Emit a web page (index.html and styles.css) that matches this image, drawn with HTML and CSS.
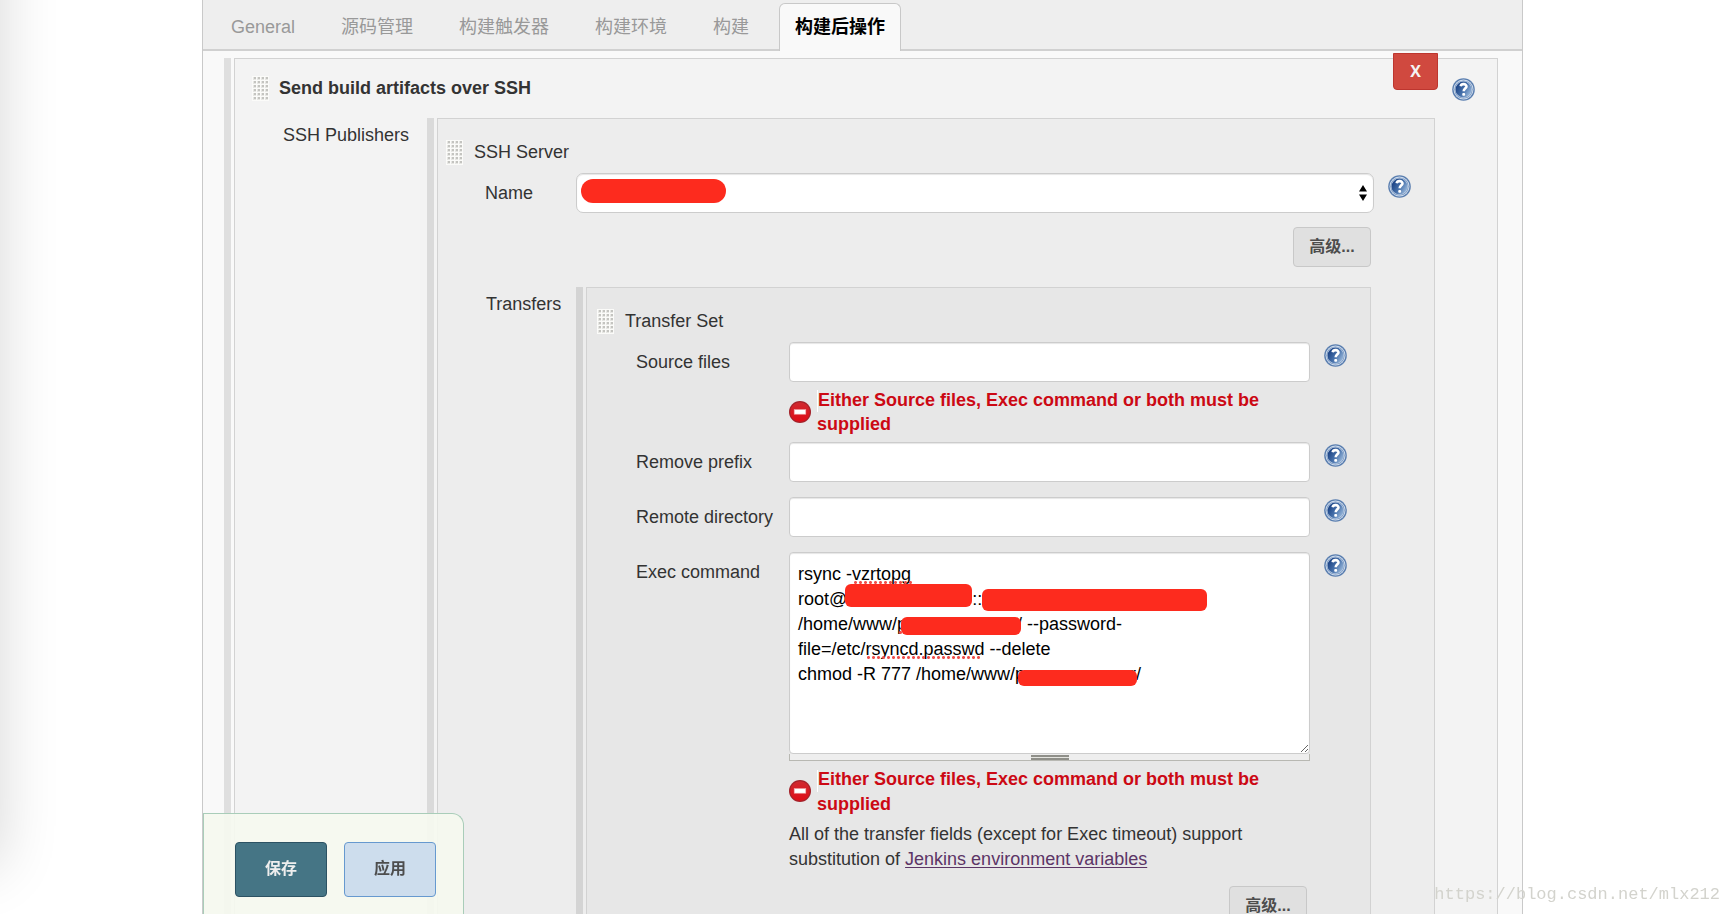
FILE: index.html
```html
<!DOCTYPE html>
<html lang="zh-CN">
<head>
<meta charset="utf-8">
<title>Jenkins</title>
<link rel="stylesheet" href="styles.css">
</head>
<body>
<svg class="defs" aria-hidden="true">
  <defs>
    <linearGradient id="blue" x1="0" y1="0.2" x2="1" y2="0.8">
      <stop offset="0.1" stop-color="#1d4587"/>
      <stop offset="0.55" stop-color="#4a74ad"/>
      <stop offset="1" stop-color="#a3c0e0"/>
    </linearGradient>
    <linearGradient id="red" x1="0" y1="0" x2="0" y2="1">
      <stop offset="0" stop-color="#cf2a30"/>
      <stop offset="1" stop-color="#e00d17"/>
    </linearGradient>
    <pattern id="dots" width="4" height="4" patternUnits="userSpaceOnUse">
      <rect width="4" height="4" fill="#fbfbf9"/>
      <rect x="1" y="1" width="3" height="3" fill="#e6e6e3"/>
      <rect x="2" y="1" width="2" height="2" fill="#c4c4c0"/>
    </pattern>
    <symbol id="help" viewBox="0 0 24 24">
      <circle cx="12" cy="12" r="11.8" fill="#5b7fb0"/>
      <circle cx="12" cy="12" r="10.4" fill="#d3dfee"/>
      <circle cx="12" cy="12" r="9.5" fill="#6f90bd"/>
      <circle cx="12" cy="12" r="8.8" fill="#c6d5e8"/>
      <circle cx="12" cy="12" r="8.3" fill="url(#blue)"/>
      <path d="M9 8.6C9.4 6.9 10.7 6.3 12.2 6.4C14 6.5 15.2 7.5 15.1 9C15 10.6 12.2 11.2 12.2 13.9" fill="none" stroke="#fff" stroke-width="2.7"/>
      <rect x="10.7" y="15.6" width="3" height="3" rx="1" fill="#fff"/>
    </symbol>
    <symbol id="error" viewBox="0 0 22 22">
      <circle cx="11" cy="11" r="11" fill="#a3222a"/>
      <circle cx="11" cy="11" r="9.8" fill="url(#red)"/>
      <rect x="5.2" y="8.6" width="11.6" height="4.6" fill="#fff" stroke="#f2a3a6" stroke-width="0.6"/>
    </symbol>
    <symbol id="grip" viewBox="0 0 17 25">
      <rect width="17" height="25" fill="url(#dots)"/>
    </symbol>
  </defs>
</svg>

<div class="edge-shadow"></div>

<main class="page">
  <form class="config">
    <nav class="tabs">
      <a class="tab" href="#general">General</a>
      <a class="tab" href="#scm">源码管理</a>
      <a class="tab" href="#triggers">构建触发器</a>
      <a class="tab" href="#environment">构建环境</a>
      <a class="tab" href="#build">构建</a>
      <a class="tab tab-active" href="#post-build">构建后操作</a>
    </nav>

    <section class="block block-outer">
      <div class="rail"></div>
      <div class="box">
        <button class="delete" type="button">X</button>
        <header class="head-main">
          <svg class="grip"><use href="#grip"/></svg>
          <h2 class="title">Send build artifacts over SSH</h2>
          <svg class="help"><use href="#help"/></svg>
        </header>
        <div class="nest nest-publishers">
          <div class="nest-label">SSH Publishers</div>
          <section class="block">
            <div class="rail"></div>
            <div class="box">
              <header class="head">
                <svg class="grip"><use href="#grip"/></svg>
                <span>SSH Server</span>
              </header>
              <div class="row row-server">
                <label class="label" for="name">Name</label>
                <div class="select-wrap">
                  <select class="field select" id="name"><option></option></select>
                  <svg class="arrows" viewBox="0 0 8 16"><path d="M4 0L8 6.5H0ZM0 9.5H8L4 16Z"/></svg>
                  <span class="mask mask-name"></span>
                </div>
                <svg class="help"><use href="#help"/></svg>
              </div>
              <div class="actions"><button class="advanced" type="button">高级...</button></div>

              <div class="nest nest-transfers">
                <div class="nest-label">Transfers</div>
                <section class="block">
                  <div class="rail"></div>
                  <div class="box">
                    <header class="head head-transfer">
                      <svg class="grip"><use href="#grip"/></svg>
                      <span>Transfer Set</span>
                    </header>
                    <div class="row">
                      <label class="label" for="source">Source files</label>
                      <input class="field" id="source" type="text">
                      <svg class="help"><use href="#help"/></svg>
                      <div class="error">
                        <svg class="error-icon"><use href="#error"/></svg>
                        <p class="error-text"><span class="spacer"></span>Either Source files, Exec command or both must be supplied</p>
                      </div>
                    </div>
                    <div class="row">
                      <label class="label" for="prefix">Remove prefix</label>
                      <input class="field" id="prefix" type="text">
                      <svg class="help"><use href="#help"/></svg>
                    </div>
                    <div class="row row-next">
                      <label class="label" for="remote">Remote directory</label>
                      <input class="field" id="remote" type="text">
                      <svg class="help"><use href="#help"/></svg>
                    </div>
                    <div class="row row-next">
                      <label class="label" for="exec">Exec command</label>
                      <div class="editor">
                        <textarea class="field command" id="exec" spellcheck="false">rsync -vzrtopg
root@&nbsp;&nbsp;&nbsp;&nbsp;&nbsp;&nbsp;&nbsp;&nbsp;&nbsp;&nbsp;&nbsp;&nbsp;&nbsp;&nbsp;&nbsp;&nbsp;&nbsp;&nbsp;&nbsp;&nbsp;&nbsp;&nbsp;&nbsp;&nbsp;&nbsp;::
/home/www/p&nbsp;&nbsp;&nbsp;&nbsp;&nbsp;&nbsp;&nbsp;&nbsp;&nbsp;&nbsp;&nbsp;&nbsp;&nbsp;&nbsp;&nbsp;&nbsp;&nbsp;&nbsp;&nbsp;&nbsp;&nbsp;&nbsp;/ --password-
file=/etc/rsyncd.passwd --delete
chmod -R 777 /home/www/p&nbsp;&nbsp;&nbsp;&nbsp;&nbsp;&nbsp;&nbsp;&nbsp;&nbsp;&nbsp;&nbsp;&nbsp;&nbsp;&nbsp;&nbsp;&nbsp;&nbsp;&nbsp;&nbsp;&nbsp;&nbsp;r/</textarea>
                        <div class="handle"></div>
                        <span class="spell spell-flags"></span>
                        <span class="spell spell-path"></span>
                        <span class="spell spell-file"></span>
                        <span class="mask mask-host"></span>
                        <span class="mask mask-module"></span>
                        <span class="mask mask-path"></span>
                        <span class="mask mask-dir"></span>
                      </div>
                      <svg class="help"><use href="#help"/></svg>
                      <div class="error">
                        <svg class="error-icon"><use href="#error"/></svg>
                        <p class="error-text"><span class="spacer"></span>Either Source files, Exec command or both must be supplied</p>
                      </div>
                      <p class="note">All of the transfer fields (except for Exec timeout) support substitution of <a class="link" href="#env">Jenkins environment variables</a></p>
                    </div>
                    <div class="actions"><button class="advanced" type="button">高级...</button></div>
                  </div>
                </section>
              </div>
            </div>
          </section>
        </div>
      </div>
    </section>
  </form>
</main>

<div class="save-bar">
  <button class="save" type="submit">保存</button>
  <button class="apply" type="button">应用</button>
</div>
<div class="watermark">https://blog.csdn.net/mlx212</div>
</body>
</html>
```
FILE: styles.css
```css
* { box-sizing: border-box; }

body {
  margin: 0;
  background: #fff;
  color: #333;
  font: 18px/24px "Liberation Sans", "Noto Sans CJK SC", sans-serif;
}

button, input, select, textarea { font: inherit; margin: 0; }
h2, p { margin: 0; }
.defs { position: absolute; width: 0; height: 0; }

.edge-shadow {
  position: fixed;
  left: -80px;
  top: -80px;
  bottom: 48px;
  width: 80px;
  box-shadow: 0 0 60px rgba(0, 0, 0, 0.16);
}

.page {
  height: 100vh;
  overflow-y: auto;
  scrollbar-width: none;
  padding: 0 206px 0 202px;
}

.config {
  border: solid #c9c9c9;
  border-width: 0 1px;
  background: #f9f9f9;
}

/* Tabs */
.tabs {
  display: flex;
  align-items: flex-end;
  gap: 14px;
  height: 51px;
  padding: 0 12px;
  background: #eee;
  box-shadow: inset 0 -2px #d0d0d0;
}
.tab {
  height: 48px;
  padding: 11px 15px 0;
  border: 1px solid transparent;
  border-bottom: 0;
  color: #999;
  text-decoration: none;
  white-space: nowrap;
}
.tab-active {
  border-color: #c8c8c8;
  border-radius: 6px 6px 0 0;
  background: #f9f9f9;
  color: #000;
  font-weight: bold;
}

/* Nested blocks */
.block { flex: 1; display: flex; gap: 3px; min-width: 0; }
.block-outer { margin: 7px 24px 0 21px; }
.rail { width: 7px; background: rgba(0, 0, 0, 0.1); }
.box {
  flex: 1;
  min-width: 0;
  position: relative;
  border: 1px solid #d2d2d2;
  background: rgba(0, 0, 0, 0.025);
}
.nest { display: flex; }
.nest-label { padding: 5px 0 0 48px; }
.nest-publishers { padding-right: 62px; }
.nest-publishers > .nest-label { width: 192px; }
.nest-transfers { padding-right: 63px; margin-top: 20px; }
.nest-transfers > .nest-label { width: 138px; }

.head-main {
  display: flex;
  align-items: center;
  height: 59px;
  padding: 0 22px 0 17px;
}
.title { margin: 0 auto 2px 10px; font-size: 18px; }
.head-main .help { margin-top: 2px; }
.head {
  display: flex;
  gap: 11px;
  padding: 21px 0 8px 8px;
}
.head-transfer { padding-left: 10px; }
.grip { width: 17px; height: 25px; }
.help { width: 23px; height: 23px; }

.delete {
  position: absolute;
  top: -6px;
  right: 59px;
  width: 45px;
  height: 37px;
  padding: 0 0 2px;
  border: 1px solid #bd362f;
  border-radius: 0 0 4px 4px;
  background: #d0493f;
  color: #f4f4f4;
  font: bold 16px "Open Sans", sans-serif;
}

/* Form rows */
.row {
  display: grid;
  grid-template-columns: 202px minmax(0, 1fr) 60px;
}
.row-server { grid-template-columns: 138px minmax(0, 1fr) 60px; }
.row-next { margin-top: 15px; }
.label { padding: 8px 0 0 49px; white-space: nowrap; }
.row-server .label { padding-left: 47px; }
.row .help { margin: 2px 0 0 14px; }
.error, .note { grid-column: 2; }
.field {
  display: block;
  width: 100%;
  height: 40px;
  padding: 9px 8px;
  border: 1px solid #ccc;
  border-radius: 4px;
  background: #fff;
  box-shadow: inset 0 1px 1px rgba(0, 0, 0, 0.1);
  color: #000;
}
.select-wrap, .editor { position: relative; }
.select { appearance: none; border-radius: 7px; }
.arrows {
  position: absolute;
  right: 7px;
  top: 12px;
  width: 8px;
  height: 16px;
}
.command { height: 202px; line-height: 25px; resize: vertical; }
.handle {
  height: 7px;
  border: 1px solid #b8b8b2;
  border-top: 0;
  background: linear-gradient(#8f8f89 0 2px, #e4e4df 2px 3px, #8f8f89 3px 5px) 50% 1px / 38px 5px no-repeat, #eee;
}

.error {
  display: flex;
  align-items: center;
  gap: 6px;
  padding: 6px 0;
  color: #cc0914;
  font-weight: bold;
}
.error-icon { flex: none; width: 22px; height: 22px; }
.spacer {
  display: inline-block;
  width: 1px;
  height: 22px;
  background: #fff;
  vertical-align: middle;
}
.note { line-height: 25px; }
.link { color: #5c3566; text-underline-offset: 2px; }

.actions { display: flex; justify-content: flex-end; padding: 14px 63px 0 0; }
.advanced {
  width: 78px;
  height: 40px;
  padding: 0;
  border: 1px solid #c8c8c8;
  border-radius: 4px;
  background: #e0e0e0;
  color: #4d4d4d;
  font-size: 16px;
  font-weight: bold;
}

/* Redaction strokes and spelling marks */
.mask { position: absolute; border-radius: 6px; background: #fd2b1e; }
.mask-name { left: 5px; top: 6px; width: 145px; height: 24px; border-radius: 12px; }
.mask-host { left: 56px; top: 32px; width: 127px; height: 23px; }
.mask-module { left: 193px; top: 37px; width: 225px; height: 22px; }
.mask-path { left: 112px; top: 65px; width: 120px; height: 18px; }
.mask-dir { left: 229px; top: 118px; width: 119px; height: 16px; }
.spell {
  position: absolute;
  height: 3px;
  background: radial-gradient(circle, #f0504c 1px, transparent 2px) 0 0 / 5px 3px;
}
.spell-flags { left: 64px; top: 29px; width: 60px; }
.spell-path { left: 109px; top: 79px; width: 5px; }
.spell-file { left: 77px; top: 104px; width: 116px; }

/* Fixed overlays */
.save-bar {
  position: fixed;
  left: 203px;
  bottom: 0;
  display: flex;
  gap: 17px;
  padding: 28px 27px 17px 31px;
  border: 1px solid #a9cdb9;
  border-bottom: 0;
  border-radius: 0 12px 0 0;
  background: rgba(245, 249, 239, 0.93);
}
.save, .apply {
  width: 92px;
  height: 55px;
  padding: 0 0 2px;
  border: 1px solid #2c5263;
  border-radius: 4px;
  background: #457585;
  color: #eee;
  font-size: 16px;
  font-weight: bold;
}
.apply { border-color: #6699cf; background: #cddded; color: #4d4d4d; }
.watermark {
  position: fixed;
  right: 9px;
  bottom: 7px;
  color: #d3d3cd;
  font: 17px/24px "Liberation Mono", monospace;
}
```
